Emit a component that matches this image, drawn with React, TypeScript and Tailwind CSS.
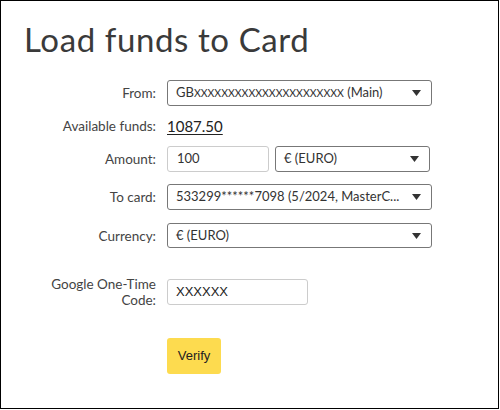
import { ReactNode } from "react";

const geo = { fontFamily: "Lato, 'Open Sans', sans-serif" };
const arial = { fontFamily: "'Liberation Sans', Arial, sans-serif" };

function Caret() {
  return (
    <svg width="9" height="6" viewBox="0 0 9 6" className="shrink-0">
      <path d="M0 0 H9 L4.5 6 Z" fill="#333" />
    </svg>
  );
}

function Select({ value, className }: { value: ReactNode; className: string }) {
  return (
    <div
      className={`flex items-center justify-between border border-[#777] rounded-[3px] pl-[8px] pr-[10px] text-[13px] text-[#333] ${className}`}
    >
      <span className="whitespace-nowrap min-w-0 flex-1 mr-[8px]">{value}</span>
      <Caret />
    </div>
  );
}

function Row({ label, children, className = "" }: { label: ReactNode; children: ReactNode; className?: string }) {
  return (
    <div className={`flex items-center ${className}`}>
      <div className="w-[132px] text-right text-[13.5px] text-[#444] leading-[16px] mr-[11px]">{label}</div>
      {children}
    </div>
  );
}

export default function App() {
  return (
    <div className="w-[499px] h-[409px] border border-black bg-white" style={geo}>
      <h1 className="text-[33px] leading-[40px] tracking-[0.6px] text-[#3a3a3a] pl-[23px] pt-[18px]">
        Load funds to Card
      </h1>

      <div className="pl-[23px] mt-[21px]">
        <Row label="From:">
          <Select
            value={
              <>
                GB<span className="text-[10.5px]">XXXXXXXXXXXXXXXXXXXXXX</span> (Main)
              </>
            }
            className="w-[265px] h-[26px]"
          />
        </Row>

        <Row label="Available funds:" className="mt-[9px]">
          <span className="text-[15px] text-[#222] underline underline-offset-2 leading-[22px]">1087.50</span>
        </Row>

        <Row label="Amount:" className="mt-[9px]">
          <div className="w-[102px] h-[26px] border border-[#ccc] rounded-[3px] flex items-center pl-[9px] text-[13px] text-[#333]">
            100
          </div>
          <Select value="€ (EURO)" className="w-[155px] h-[26px] ml-[6px]" />
        </Row>

        <Row label="To card:" className="mt-[12px]">
          <Select value="533299******7098 (5/2024, MasterC..." className="w-[265px] h-[26px]" />
        </Row>

        <Row label="Currency:" className="mt-[13px]">
          <Select value="€ (EURO)" className="w-[265px] h-[25px]" />
        </Row>

        <Row label={<>Google One-Time<br />Code:</>} className="mt-[28px]">
          <div
            className="w-[141px] h-[26px] border border-[#ccc] rounded-[3px] flex items-center pl-[8px] text-[13px] text-[#222]"
            style={arial}
          >
            XXXXXX
          </div>
        </Row>

        <div className="pl-[143px] mt-[30px]">
          <button
            className="w-[54px] h-[36px] bg-[#fddb4f] rounded-[3px] text-[13px] text-[#222]"
            style={arial}
          >
            Verify
          </button>
        </div>
      </div>
    </div>
  );
}
